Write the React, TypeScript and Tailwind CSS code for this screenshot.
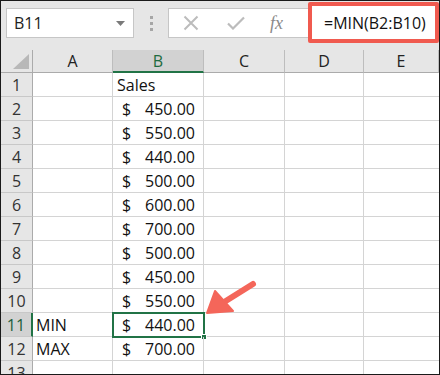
const cols = ["A", "B", "C", "D", "E"];
const widths = ["w-[32px]", "w-[80px]", "w-[91px]", "w-[81px]", "w-[79px]", "w-[75px]"];

const rows: { a?: string; b?: string; money?: boolean }[] = [
  { b: "Sales" },
  { b: "450.00", money: true },
  { b: "550.00", money: true },
  { b: "440.00", money: true },
  { b: "500.00", money: true },
  { b: "600.00", money: true },
  { b: "700.00", money: true },
  { b: "500.00", money: true },
  { b: "450.00", money: true },
  { b: "550.00", money: true },
  { a: "MIN", b: "440.00", money: true },
  { a: "MAX", b: "700.00", money: true },
  {},
];

function Toolbar() {
  return (
    <div className="relative flex h-[49px] shrink-0 items-start bg-[#e6e6e6] pt-[7px]">
      <div className="ml-[5px] flex h-[30px] w-[128px] items-center justify-between border border-[#c6c6c6] bg-white pl-[7px] pr-[8px] text-[16px] text-[#222]">
        <span>B11</span>
        <svg width="9" height="5" viewBox="0 0 9 5">
          <path d="M0 0 H9 L4.5 5 Z" fill="#7a7a7a" />
        </svg>
      </div>
      <div className="ml-[16px] mt-[8px] flex flex-col gap-[3px]">
        <div className="h-[3px] w-[3px] bg-[#a6a6a6]" />
        <div className="h-[3px] w-[3px] bg-[#a6a6a6]" />
        <div className="h-[3px] w-[3px] bg-[#a6a6a6]" />
      </div>
      <div className="ml-[15px] flex h-[30px] flex-1 items-center border border-r-0 border-[#c6c6c6] bg-white">
        <svg className="ml-[14px]" width="16" height="16" viewBox="0 0 16 16">
          <path d="M1.5 1.5 L14.5 14.5 M14.5 1.5 L1.5 14.5" stroke="#bcbcbc" strokeWidth="2" />
        </svg>
        <svg className="ml-[28px]" width="18" height="14" viewBox="0 0 18 14">
          <path d="M1 7.5 L6 12.5 L17 1.5" stroke="#bcbcbc" strokeWidth="2.2" fill="none" />
        </svg>
        <span className="ml-[25px] font-['Liberation_Serif',serif] text-[18px] italic text-[#8a8a8a]">fx</span>
      </div>
      <div className="absolute left-[307px] top-[1px] flex h-[41px] w-[131px] items-center rounded-[2px] border-[4px] border-[#f05a4f] bg-white pl-[12px] text-[16px] text-[#111]">
        =MIN(B2:B10)
      </div>
    </div>
  );
}

function HeaderRow() {
  return (
    <div className="flex h-[23px] shrink-0 bg-[#e6e6e6] text-[16px] text-[#222]">
      <div className={`${widths[0]} relative border-r border-b border-[#ababab]`}>
        <svg className="absolute right-[3px] bottom-[3px]" width="16" height="15" viewBox="0 0 16 15">
          <path d="M16 0 V15 H0 Z" fill="#b8b8b8" />
        </svg>
      </div>
      {cols.map((c, i) => (
        <div
          key={c}
          className={`${widths[i + 1]} flex items-center justify-center border-r border-[#bdbdbd] ${
            c === "B" ? "border-b-2 border-b-[#217346] bg-[#d2d2d2] text-[#1e6b40]" : "border-b border-b-[#ababab]"
          }`}
        >
          {c}
        </div>
      ))}
    </div>
  );
}

function App() {
  return (
    <div className="relative flex h-[375px] w-[440px] flex-col overflow-hidden border border-[#1a1a1a] bg-white font-['Open_Sans',sans-serif] leading-none">
      <Toolbar />
      <HeaderRow />
      {rows.map((r, i) => {
        const n = i + 1;
        const sel = n === 11;
        return (
          <div key={n} className="flex h-[24px] shrink-0 text-[16px] text-[#111]">
            <div
              className={`${widths[0]} flex items-center justify-center border-b border-[#c8c8c8] ${
                sel ? "border-r-2 border-r-[#217346] bg-[#d2d2d2] text-[#1e5e3b]" : "border-r border-r-[#ababab] bg-[#e6e6e6] text-[#333]"
              }`}
            >
              {n}
            </div>
            <div className={`${widths[1]} flex items-center border-r border-b border-[#d4d4d4] pl-[3px]`}>{r.a}</div>
            <div className={`${widths[2]} relative flex items-center border-r border-b border-[#d4d4d4] pl-[4px] pr-[8px]`}>
              {r.money ? (
                <>
                  <span className="pl-[5px]">$</span>
                  <span className="ml-auto">{r.b}</span>
                </>
              ) : (
                r.b
              )}
              {sel && (
                <div className="absolute -left-px -top-px h-[26px] w-[93px] border-2 border-[#217346]">
                  <div className="absolute -right-[4px] -bottom-[4px] h-[6px] w-[6px] border border-white bg-[#217346]" />
                </div>
              )}
            </div>
            <div className={`${widths[3]} border-r border-b border-[#d4d4d4]`} />
            <div className={`${widths[4]} border-r border-b border-[#d4d4d4]`} />
            <div className={`${widths[5]} border-b border-[#d4d4d4]`} />
          </div>
        );
      })}
      <svg className="absolute left-[200px] top-[276px]" width="60" height="44" viewBox="0 0 60 44">
        <path d="M52 7 L20 27" stroke="#f4665a" strokeWidth="6" strokeLinecap="round" />
        <path d="M6 36 L14 14 L32 34 Z" fill="#f4665a" stroke="#f4665a" strokeWidth="2" strokeLinejoin="round" />
      </svg>
    </div>
  );
}

export default App;
